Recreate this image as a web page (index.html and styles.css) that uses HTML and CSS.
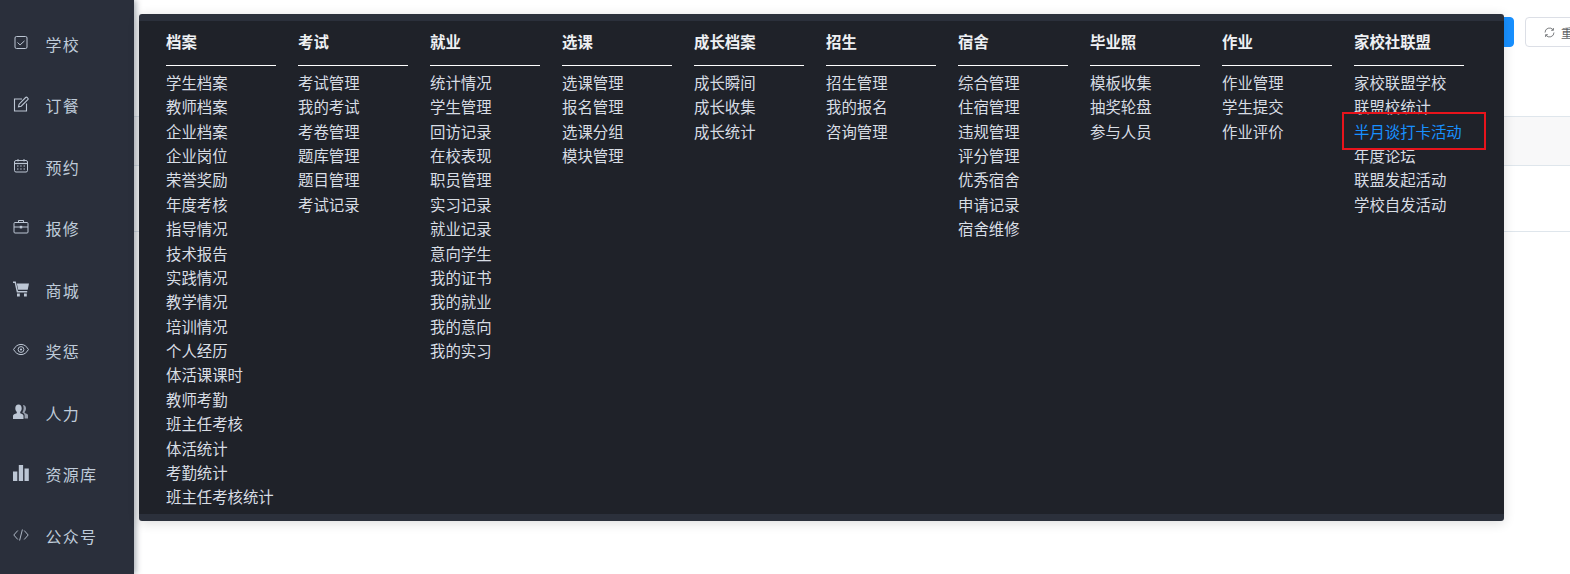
FILE: index.html
```html
<!DOCTYPE html>
<html lang="zh-CN">
<head>
<meta charset="utf-8">
<title>半月谈打卡活动</title>
<link rel="stylesheet" href="styles.css">
</head>
<body>
<div class="app">
  <aside class="sidebar">
    <a class="nav"><svg class="ico" viewBox="0 0 16 16"><rect x="2" y="1.500" width="12" height="12" rx="1.500" fill="none" stroke="currentColor"/><path d="M4.500 7.500l2.600 2.400 4.400-4" fill="none" stroke="currentColor"/></svg><span>学校</span></a>
    <a class="nav"><svg class="ico" viewBox="0 0 16 16"><path d="M9 3H1.500v12h12V7.500" fill="none" stroke="currentColor" stroke-width="1.100"/><path d="M5.500 10.800l.6-2.600L12.600 1.500a1.100 1.100 0 0 1 1.600 0l.6.6a1.100 1.100 0 0 1 0 1.600L8.200 10.200z" fill="none" stroke="currentColor" stroke-width="1.100"/></svg><span>订餐</span></a>
    <a class="nav"><svg class="ico" viewBox="0 0 16 16"><rect x="1.500" y="2.500" width="13" height="11.500" rx="1.500" fill="none" stroke="currentColor"/><path d="M1.500 5.500h13" stroke="currentColor" stroke-width="1.200"/><path d="M5 1v2.500M11 1v2.500" stroke="currentColor"/><path d="M4 8h1.500M7.200 8h1.500M10.500 8H12M4 11h1.500M7.200 11h1.500M10.500 11H12" stroke="currentColor"/></svg><span>预约</span></a>
    <a class="nav"><svg class="ico" viewBox="0 0 16 16"><path d="M5.500 3.500V1.500h5v2" fill="none" stroke="currentColor"/><rect x="1" y="3.500" width="14" height="10.500" rx="1" fill="none" stroke="currentColor"/><path d="M1 8h14" stroke="currentColor"/><rect x="6.800" y="6.800" width="2.400" height="2.600" fill="currentColor"/></svg><span>报修</span></a>
    <a class="nav"><svg class="ico" viewBox="0 0 16 16"><path d="M0 .5h2.800l2.200 9.500h9.200v1.400H3.800L1.700 2H0z" fill="currentColor"/><path d="M3.800 2.500H16l-1.300 6.300H5.200z" fill="currentColor"/><rect x="4" y="12.500" width="2.800" height="3" fill="currentColor"/><rect x="11" y="12.500" width="2.800" height="3" fill="currentColor"/></svg><span>商城</span></a>
    <a class="nav"><svg class="ico" viewBox="0 0 16 16"><path d="M.6 7.500C2.400 4.100 5 2.400 8 2.400s5.600 1.700 7.400 5.100C13.600 10.900 11 12.600 8 12.600S2.400 10.900.6 7.500z" fill="none" stroke="currentColor"/><circle cx="8" cy="7.500" r="2.900" fill="none" stroke="currentColor"/><circle cx="8" cy="7.500" r="1.100" fill="currentColor"/></svg><span>奖惩</span></a>
    <a class="nav"><svg class="ico" viewBox="0 0 16 16"><path d="M5.500 .5c2 0 3.200 1.600 3.200 3.700 0 1.500-.7 3.100-1.500 3.800v1.200c1.800.6 3.300 1.300 3.300 2.500v3.300H0v-3.300c0-1.200 1.800-1.900 3.800-2.500V8C3 7.300 2.300 5.700 2.300 4.200 2.300 2.100 3.500.5 5.500.5z" fill="currentColor"/><path d="M10 1c1.800 0 3 1.400 3 3.400 0 1.400-.6 2.800-1.300 3.500v1.200c1.900.6 3.300 1.200 3.300 2.400v3h-3.400v-3c0-1.300-1-2.200-2.400-2.900.8-1.100 1.400-2.800 1.400-4.500 0-1-.2-2-.7-2.800.2 0 .4-.3.600-.3z" fill="currentColor" opacity=".75"/></svg><span>人力</span></a>
    <a class="nav"><svg class="ico" viewBox="0 0 16 16"><rect x="0" y="6.500" width="4.300" height="9.500" fill="currentColor"/><rect x="5.800" y="0" width="4.300" height="16" fill="currentColor"/><rect x="11.500" y="3.500" width="4.300" height="12.500" fill="currentColor"/></svg><span>资源库</span></a>
    <a class="nav"><svg class="ico" viewBox="0 0 16 16"><path d="M4.800 3.500L.8 8l4 4.500M11.200 3.500l4 4.500-4 4.500M9.400 2.500L6.600 13.500" fill="none" stroke="currentColor" stroke-width=".9"/></svg><span>公众号</span></a>
  </aside>
  <main class="content">
    <div class="toolbar">
      <button class="btn btn-primary">查询</button>
      <button class="btn btn-plain"><svg class="btn-ico" viewBox="0 0 16 16"><path d="M13.500 8A5.500 5.500 0 0 1 3.500 11.200M2.500 8A5.500 5.500 0 0 1 12.500 4.800" fill="none" stroke="#606266"/><path d="M12.800 2.500v2.800H10M3.200 13.500v-2.800H6" fill="none" stroke="#606266"/></svg>重置</button>
    </div>
    <div class="table">
      <div class="thead"></div>
      <div class="trow"></div>
    </div>
  </main>
</div>
<section class="mega">
  <div class="mega-col">
    <h4>档案</h4>
    <a>学生档案</a><a>教师档案</a><a>企业档案</a><a>企业岗位</a><a>荣誉奖励</a><a>年度考核</a><a>指导情况</a><a>技术报告</a><a>实践情况</a><a>教学情况</a><a>培训情况</a><a>个人经历</a><a>体活课课时</a><a>教师考勤</a><a>班主任考核</a><a>体活统计</a><a>考勤统计</a><a>班主任考核统计</a>
  </div>
  <div class="mega-col">
    <h4>考试</h4>
    <a>考试管理</a><a>我的考试</a><a>考卷管理</a><a>题库管理</a><a>题目管理</a><a>考试记录</a>
  </div>
  <div class="mega-col">
    <h4>就业</h4>
    <a>统计情况</a><a>学生管理</a><a>回访记录</a><a>在校表现</a><a>职员管理</a><a>实习记录</a><a>就业记录</a><a>意向学生</a><a>我的证书</a><a>我的就业</a><a>我的意向</a><a>我的实习</a>
  </div>
  <div class="mega-col">
    <h4>选课</h4>
    <a>选课管理</a><a>报名管理</a><a>选课分组</a><a>模块管理</a>
  </div>
  <div class="mega-col">
    <h4>成长档案</h4>
    <a>成长瞬间</a><a>成长收集</a><a>成长统计</a>
  </div>
  <div class="mega-col">
    <h4>招生</h4>
    <a>招生管理</a><a>我的报名</a><a>咨询管理</a>
  </div>
  <div class="mega-col">
    <h4>宿舍</h4>
    <a>综合管理</a><a>住宿管理</a><a>违规管理</a><a>评分管理</a><a>优秀宿舍</a><a>申请记录</a><a>宿舍维修</a>
  </div>
  <div class="mega-col">
    <h4>毕业照</h4>
    <a>模板收集</a><a>抽奖轮盘</a><a>参与人员</a>
  </div>
  <div class="mega-col">
    <h4>作业</h4>
    <a>作业管理</a><a>学生提交</a><a>作业评价</a>
  </div>
  <div class="mega-col">
    <h4>家校社联盟</h4>
    <a>家校联盟学校</a><a>联盟校统计</a><a class="active">半月谈打卡活动</a><a>年度论坛</a><a>联盟发起活动</a><a>学校自发活动</a>
  </div>
</section>
</body>
</html>
```

FILE: styles.css
```css
* {
  box-sizing: border-box;
}

html,
body {
  margin: 0;
  height: 100%;
  overflow: hidden;
  background: #fff;
  font-family: "Noto Sans CJK SC", "Liberation Sans", sans-serif;
}

.app {
  display: flex;
  height: 574px;
}

.sidebar {
  flex: 0 0 134px;
  padding-top: 13px;
  background: #2a2f3b;
  color: #bfcbd9;
  box-shadow: 2px 0 6px rgba(0, 21, 41, 0.35);
  position: relative;
  z-index: 1;
}

.nav {
  display: flex;
  align-items: center;
  height: 61.5px;
  padding-left: 12.500px;
  font-size: 16px;
  letter-spacing: 1.300px;
}

.ico {
  flex: 0 0 16px;
  width: 16px;
  height: 16px;
  margin-right: 17px;
  margin-top: -2px;
  color: #bcc6d4;
}

.content {
  flex: 1;
  min-width: 0;
  padding-top: 17px;
}

.toolbar {
  display: flex;
  justify-content: flex-end;
  gap: 11px;
  height: 99px;
  margin-right: -70px;
}

.btn {
  height: 30px;
  border-radius: 4px;
  border: 1px solid #dcdfe6;
  font: 12px "Noto Sans CJK SC", "Liberation Sans", sans-serif;
  display: inline-flex;
  align-items: center;
  padding: 0 17px;
  white-space: nowrap;
}

.btn-primary {
  background: #1890ff;
  border-color: #1890ff;
  color: #fff;
  width: 80px;
  justify-content: center;
}

.btn-plain {
  background: #fff;
  color: #606266;
  width: 115px;
}

.btn-ico {
  width: 13px;
  height: 13px;
  margin-right: 5px;
}

.thead {
  height: 50px;
  background: #f8f8f9;
  border-top: 1px solid #dfe6ec;
  border-bottom: 1px solid #dfe6ec;
}

.trow {
  height: 66px;
  border-bottom: 1px solid #dfe6ec;
}

.mega {
  position: absolute;
  left: 139px;
  top: 14px;
  width: 1365px;
  height: 507px;
  padding: 7.500px 0 0 27px;
  display: grid;
  grid-template-columns: repeat(10, 110px);
  column-gap: 22px;
  background: #1f2229;
  border-top: 7px solid #2b303b;
  border-bottom: 7px solid #2b303b;
  border-radius: 3px;
  box-shadow: 0 2px 12px rgba(0, 0, 0, 0.14);
  z-index: 2;
}

.mega-col {
  display: flex;
  flex-direction: column;
  align-items: flex-start;
  font-size: 15.4px;
  line-height: 24.38px;
  color: #d8dde4;
}

.mega-col h4 {
  width: 110px;
  margin: 0 0 4px;
  padding-bottom: 12px;
  border-bottom: 1px solid #fff;
  font-size: 15.4px;
  font-weight: 700;
  line-height: 24.38px;
  color: #eef0f3;
}

.mega-col a {
  display: block;
  white-space: nowrap;
}

.mega-col .active {
  position: relative;
  color: #1890ff;
}

.mega-col .active::after {
  content: "";
  box-sizing: border-box;
  position: absolute;
  left: -12px;
  top: -7px;
  width: 144px;
  height: 38px;
  border: 2px solid #e8141c;
}
```
